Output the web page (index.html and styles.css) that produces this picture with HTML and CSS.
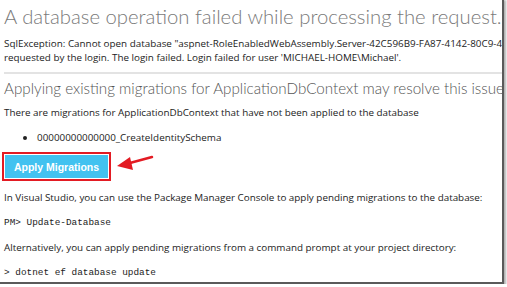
FILE: index.html
```html
<!DOCTYPE html>
<html>
<head>
<meta charset="utf-8">
<link rel="stylesheet" href="styles.css">
</head>
<body>
<div class="shot">
  <div class="page">
    <h1 class="title">A database operation failed while processing the request.</h1>
    <p class="err">SqlException: Cannot open database "aspnet-RoleEnabledWebAssembly.Server-42C596B9-FA87-4142-80C9-4E4F1E2A5B7C" requested<br>requested by the login. The login failed. Login failed for user 'MICHAEL-HOME\Michael'.</p>
    <hr class="rule">
    <h2 class="sub">Applying existing migrations for ApplicationDbContext may resolve this issue</h2>
    <p class="txt first">There are migrations for ApplicationDbContext that have not been applied to the database</p>
    <ul class="list">
      <li>00000000000000_CreateIdentitySchema</li>
    </ul>
    <div class="action">
      <span class="annot"><button class="btn">Apply Migrations</button></span>
      <svg class="arrow" width="40" height="22" viewBox="0 0 40 22">
        <line x1="36" y1="3" x2="12" y2="9.5" stroke="#e31b23" stroke-width="2.5" stroke-linecap="round"/>
        <polygon points="1,12 14,3 17,16" fill="#e31b23"/>
      </svg>
    </div>
    <p class="txt gap">In Visual Studio, you can use the Package Manager Console to apply pending migrations to the database:</p>
    <p class="code">PM&gt; Update-Database</p>
    <p class="txt">Alternatively, you can apply pending migrations from a command prompt at your project directory:</p>
    <p class="code">&gt; dotnet ef database update</p>
  </div>
</div>
</body>
</html>
```
FILE: styles.css
```css
html, body {
  margin: 0;
  padding: 0;
  background: #ffffff;
}
.shot {
  width: 502px;
  height: 282px;
  border-right: 2px solid #5a5a5a;
  border-bottom: 2px solid #5a5a5a;
  box-shadow: 1px 1px 2px 1px #b0b0b0;
  overflow: hidden;
  background: #fff;
  position: relative;
}
.page {
  padding: 0 0 0 4px;
  font-family: "Open Sans", "Noto Sans", sans-serif;
  color: #222;
  white-space: nowrap;
}
.title {
  margin: 0;
  padding-top: 1px;
  font-family: Lato, sans-serif;
  font-weight: 300;
  font-size: 20.3px;
  line-height: 30px;
  color: #7a7a7a;
}
.err {
  margin: 5px 0 0;
  font-size: 9.85px;
  line-height: 14px;
}
.rule {
  margin: 8px 0 0 0;
  border: 0;
  height: 2px;
  background: #e3e3e3;
}
.sub {
  margin: 4px 0 0;
  font-family: Lato, sans-serif;
  font-weight: 300;
  font-size: 15.2px;
  line-height: 20px;
  color: #555;
}
.txt {
  margin: 10px 0 0;
  font-size: 9.85px;
  line-height: 14px;
}
.txt.first {
  margin-top: 7px;
}
.list {
  margin: 11px 0 0;
  padding-left: 33px;
  font-size: 9.85px;
  line-height: 14px;
}
.action {
  display: flex;
  align-items: center;
  margin-top: 8px;
  margin-left: -2px;
  position: relative;
}
.annot {
  display: inline-block;
  border: 2px solid #e31b23;
  padding: 1px;
}
.btn {
  display: block;
  width: 103px;
  height: 23px;
  border: 0;
  padding: 0;
  background: #42c2f0;
  color: #fff;
  font-family: "Liberation Sans", Arial, sans-serif;
  font-weight: bold;
  font-size: 10.5px;
}
.arrow {
  margin-left: 5px;
  margin-top: -4px;
}
.txt.gap {
  margin-top: 9px;
}
.code {
  margin: 12px 0 0;
  font-family: "Liberation Mono", monospace;
  font-size: 9.4px;
  line-height: 14px;
}
```
